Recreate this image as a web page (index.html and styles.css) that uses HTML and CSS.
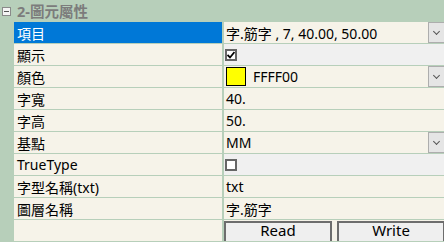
FILE: index.html
```html
<!DOCTYPE html>
<html lang="zh-Hant">

<head>
    <meta charset="UTF-8">
    <meta name="viewport" content="width=device-width, initial-scale=1.0">
    <title>圖元屬性</title>
    <link rel="stylesheet" href="styles.css">
</head>

<body>
    <div class="categoria">
        <span class="plegar"></span>
        <span class="titulo">2-圖元屬性</span>
    </div>

    <div class="propiedades">
        <div class="etiqueta seleccionado">項目</div>
        <div class="valor desplegable">字.筋字 , 7, 40.00, 50.00<span class="flecha"></span></div>

        <div class="etiqueta">顯示</div>
        <div class="valor gris">
            <span class="casilla">
                <svg width="8" height="8" viewBox="0 0 8 8"><path d="M0.5 4 L3 6.5 L7.5 1" fill="none" stroke="#000" stroke-width="1.8"/></svg>
            </span>
        </div>

        <div class="etiqueta">顏色</div>
        <div class="valor desplegable"><span class="muestra"></span>FFFF00<span class="flecha"></span></div>

        <div class="etiqueta">字寬</div>
        <div class="valor">40.</div>

        <div class="etiqueta">字高</div>
        <div class="valor">50.</div>

        <div class="etiqueta">基點</div>
        <div class="valor desplegable">MM<span class="flecha"></span></div>

        <div class="etiqueta">TrueType</div>
        <div class="valor gris"><span class="casilla"></span></div>

        <div class="etiqueta">字型名稱(txt)</div>
        <div class="valor">txt</div>

        <div class="etiqueta">圖層名稱</div>
        <div class="valor">字.筋字</div>

        <div class="etiqueta"></div>
        <div class="valor botones">
            <button>Read</button>
            <button>Write</button>
        </div>
    </div>
</body>

</html>
```

FILE: styles.css
```css
body {
    margin: 0;
    padding: 0;
    background-color: #b7cfba;
    font-family: "Noto Sans", "Noto Sans CJK TC", sans-serif;
    font-size: 14px;
    color: #000;
}

.categoria {
    height: 22px;
    display: flex;
    align-items: center;
}

.plegar {
    position: relative;
    width: 7px;
    height: 7px;
    margin: 0 6px 0 2px;
    border: 1px solid #8a8a8a;
    background-color: #f4f4f4;
}

.plegar::after {
    content: '';
    position: absolute;
    left: 1px;
    top: 3px;
    width: 5px;
    height: 1px;
    background-color: #555;
}

.titulo {
    color: #7c7c7c;
    font-weight: bold;
    font-size: 14.5px;
    line-height: 22px;
}

.propiedades {
    margin-left: 14px;
    display: grid;
    grid-template-columns: 208px 1fr;
    grid-auto-rows: 21px;
    column-gap: 2px;
    row-gap: 1px;
}

.propiedades > div:nth-last-child(-n+2) {
    height: 22px;
}

.etiqueta,
.valor {
    display: flex;
    align-items: center;
    background-color: #f6f3e9;
    white-space: nowrap;
}

.etiqueta {
    padding-left: 3px;
}

.etiqueta.seleccionado {
    background-color: #0078d7;
    color: #fff;
}

.valor {
    position: relative;
    padding-left: 2px;
}

.valor.gris {
    background-color: #f0f0f0;
    padding-left: 1px;
}

.flecha {
    position: absolute;
    right: 0;
    top: 0;
    bottom: 0;
    width: 15px;
    border: 1px solid #adadad;
    background-color: #e5e5e5;
}

.flecha::after {
    content: '';
    position: absolute;
    left: 5px;
    top: 6px;
    width: 4px;
    height: 4px;
    border-right: 1px solid #555;
    border-bottom: 1px solid #555;
    transform: rotate(45deg);
}

.muestra {
    width: 18px;
    height: 17px;
    border: 1px solid #000;
    background-color: #ffff00;
    margin-right: 7px;
}

.casilla {
    display: flex;
    width: 8px;
    height: 8px;
    border: 2px solid #666;
    background-color: #fff;
}

.botones {
    padding-left: 0;
    gap: 5px;
    align-items: stretch;
    padding-top: 1px;
}

.botones button {
    width: 108px;
    margin: 0;
    padding: 0 0 3px 0;
    border: 2px solid #6d6d6d;
    background-color: #efefef;
    font-family: "Noto Sans", sans-serif;
    font-size: 15px;
    line-height: 15px;
    color: #000;
}
```
